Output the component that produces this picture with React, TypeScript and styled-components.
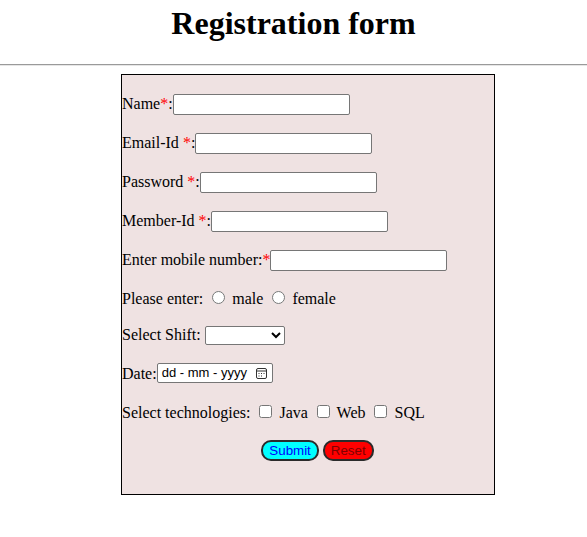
import styled, { createGlobalStyle } from "styled-components";

const GlobalStyle = createGlobalStyle`
    body {
        margin: 0;
        font-family: "Liberation Serif", "Times New Roman", serif;
        font-size: 16px;
        background: #ffffff;
        color: #000000;
    }
`;

const Title = styled.h1`
    margin: 5px 0 22px;
    text-align: center;
    font-size: 32px;
    font-weight: bold;
`;

const Divider = styled.hr`
    margin: 0 0 8px;
    border: 0;
    border-top: 1px solid #9a9a9a;
    border-bottom: 1px solid #e6e6e6;
`;

const FormBox = styled.form`
    box-sizing: border-box;
    width: 374px;
    height: 421px;
    margin-left: 121px;
    padding-top: 1px;
    border: 1px solid #000000;
    background-color: #efe2e2;
    overflow: hidden;
`;

const Row = styled.div<{ $gap?: number; $center?: boolean }>`
    height: 23px;
    line-height: 23px;
    margin-top: ${(p) => p.$gap ?? 16}px;
    white-space: nowrap;
    text-align: ${(p) => (p.$center ? "center" : "left")};
    padding-left: ${(p) => (p.$center ? "19px" : "0")};
`;

const Star = styled.span`
    color: #ff0000;
`;

const TextInput = styled.input`
    box-sizing: border-box;
    width: 177px;
    height: 21px;
    padding: 1px 2px;
    border: 1px solid #767676;
    border-radius: 2px;
    background: #ffffff;
    font-family: "Liberation Sans", Arial, sans-serif;
    font-size: 13.33px;
    vertical-align: 0;
`;

const Select = styled.select`
    box-sizing: border-box;
    width: 80px;
    height: 19px;
    padding: 0;
    border: 1px solid #767676;
    border-radius: 2px;
    background: #ffffff;
    font-family: "Liberation Sans", Arial, sans-serif;
    font-size: 13.33px;
    vertical-align: 0;
`;

const DateBox = styled.span`
    box-sizing: border-box;
    display: inline-flex;
    align-items: center;
    justify-content: space-between;
    width: 116px;
    height: 20px;
    padding: 0 5px 0 4px;
    border: 1px solid #767676;
    border-radius: 2px;
    background: #ffffff;
    font-family: "Liberation Sans", Arial, sans-serif;
    font-size: 13px;
    line-height: 18px;
    color: #000000;
    vertical-align: 2px;
`;

const Choice = styled.input`
    width: 13px;
    height: 13px;
    margin: 3px 3px 0 5px;
`;

const Button = styled.button<{ $bg: string; $fg: string }>`
    height: 21px;
    font-family: "Liberation Sans", Arial, sans-serif;
    font-size: 13.33px;
    padding: 1px 6px;
    border: 2px solid #2b2b2b;
    border-radius: 10px;
    background-color: ${(p) => p.$bg};
    color: ${(p) => p.$fg};
`;

function CalendarIcon() {
    return (
        <svg width="11" height="11" viewBox="0 0 11 11" fill="none">
            <rect x="0.5" y="0.5" width="10" height="10" rx="1.5" stroke="#333" />
            <line x1="0.5" y1="3" x2="10.5" y2="3" stroke="#333" />
            <rect x="2.5" y="5" width="1" height="1" fill="#333" />
            <rect x="5" y="5" width="1" height="1" fill="#333" />
            <rect x="7.5" y="5" width="1" height="1" fill="#333" />
            <rect x="2.5" y="7.5" width="1" height="1" fill="#333" />
            <rect x="5" y="7.5" width="1" height="1" fill="#333" />
        </svg>
    );
}

export default function App() {
    return (
        <>
            <GlobalStyle />
            <Title>Registration form</Title>
            <Divider />
            <FormBox onSubmit={(e) => e.preventDefault()}>
                <Row>
                    Name<Star>*</Star>:<TextInput type="text" />
                </Row>
                <Row>
                    Email-Id <Star>*</Star>:<TextInput type="email" />
                </Row>
                <Row>
                    Password <Star>*</Star>:<TextInput type="password" />
                </Row>
                <Row>
                    Member-Id <Star>*</Star>:<TextInput type="text" />
                </Row>
                <Row>
                    Enter mobile number:<Star>*</Star>
                    <TextInput type="tel" />
                </Row>
                <Row>
                    Please enter: <Choice type="radio" name="gender" /> male{" "}
                    <Choice type="radio" name="gender" /> female
                </Row>
                <Row $gap={13}>
                    Select Shift:{" "}
                    <Select defaultValue="">
                        <option value=""></option>
                        <option value="day">Day</option>
                        <option value="night">Night</option>
                    </Select>
                </Row>
                <Row>
                    Date:
                    <DateBox>
                        <span>dd - mm - yyyy</span>
                        <CalendarIcon />
                    </DateBox>
                </Row>
                <Row $gap={16}>
                    Select technologies: <Choice type="checkbox" /> Java{" "}
                    <Choice type="checkbox" /> Web <Choice type="checkbox" /> SQL
                </Row>
                <Row $gap={14} $center>
                    <Button type="submit" $bg="#00ffff" $fg="#0000ff">
                        Submit
                    </Button>{" "}
                    <Button type="reset" $bg="#ff0000" $fg="#800000">
                        Reset
                    </Button>
                </Row>
            </FormBox>
        </>
    );
}
